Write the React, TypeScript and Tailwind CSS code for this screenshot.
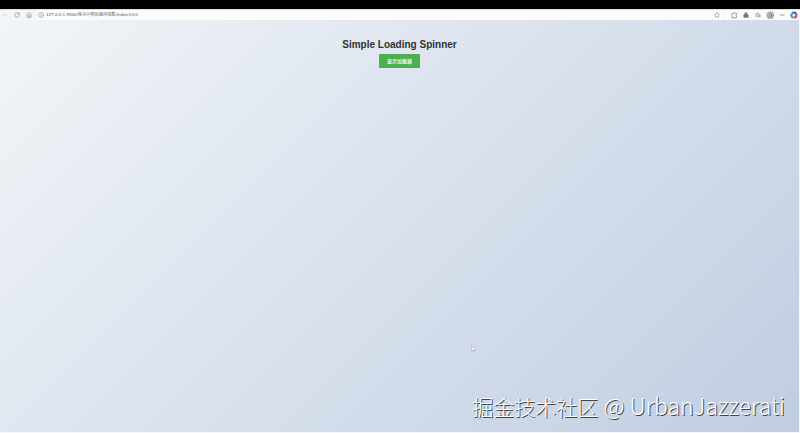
import { useState } from "react";
import { ArrowLeft, CircleUserRound, Ellipsis, House, Info, Lock, RotateCw, Star } from "lucide-react";

const iconButton = "flex size-2 items-center justify-center text-[#777777]";

function CopilotLogo() {
  return (
    <svg viewBox="0 0 16 16" className="size-2">
      <path d="M5 1h5l2 4H7L4 11H1.5Q0 9 1 7z" fill="#2f8fd8" />
      <path d="M10 1q2 0 3 3l1 2H8z" fill="#2b4fb5" />
      <path d="M15 6q1 3-1 7l-2 2H7l3-9z" fill="#d9578f" />
      <path d="M1 9h5l2 6H5q-3 0-4-6z" fill="#4fae6b" />
      <path d="M6 6h4l-1 4H5z" fill="#ffffff" />
    </svg>
  );
}

function FavoritesIcon() {
  return (
    <svg viewBox="0 0 24 24" className="size-[6px]" fill="none" stroke="currentColor" strokeWidth="2.5">
      <path d="M10 3l2.500 5.500 6 .8-4.300 4 1 6L10 16.500 5 19.300l1-6-4.500-4 6-.8z" />
      <path d="M17 14h6M16 19h7" />
    </svg>
  );
}

function ExtensionsIcon() {
  return (
    <svg viewBox="0 0 24 24" className="size-[7px]" fill="none" stroke="currentColor" strokeWidth="2.5">
      <path d="M4 5h5a3 3 0 0 1 6 0h4v5a3 3 0 0 0 0 5v5H4v-5a3 3 0 0 1 0-5z" />
    </svg>
  );
}

function BrowserBar() {
  const [url, setUrl] = useState("127.0.0.1:5500/练习小项目/脉冲加载/index.html");

  return (
    <header className="flex h-[11px] items-center border-t border-[#dddddd] bg-[#f5f5f5]">
      <nav className="flex items-center gap-1 pr-1 pl-[1px]">
        <button aria-label="Back" className="flex size-2 items-center justify-center text-[#cccccc]">
          <ArrowLeft size={6} />
        </button>
        <button aria-label="Reload" className={iconButton}>
          <RotateCw size={6} />
        </button>
        <button aria-label="Home" className={iconButton}>
          <House size={6} />
        </button>
      </nav>
      <div className="flex h-full min-w-0 flex-1 items-center gap-[2px] bg-[#fcfcfc] pl-[1px]">
        <Info size={6} className="text-[#777777]" />
        <input
          aria-label="Address"
          value={url}
          onChange={(e) => setUrl(e.target.value)}
          className="h-2 min-w-0 flex-1 bg-transparent font-['DejaVu_Sans','Noto_Sans_CJK_SC',sans-serif] text-[4px] leading-2 text-[#555555] outline-none"
        />
        <div className="flex items-center gap-[2px] pr-1">
          <button aria-label="Add to favorites" className={iconButton}>
            <Star size={6} />
          </button>
          <span className="h-2 w-px bg-[#eeeeee]" />
        </div>
        <div className="flex items-center gap-1 pr-[2px]">
          <button aria-label="Extensions" className={iconButton}>
            <ExtensionsIcon />
          </button>
          <button aria-label="Password extension" className={iconButton}>
            <Lock size={6} fill="currentColor" />
          </button>
          <button aria-label="Favorites" className={iconButton}>
            <FavoritesIcon />
          </button>
          <button aria-label="Profile" className="flex size-2 items-center justify-center rounded-full bg-[#d5d5d5] text-[#666666]">
            <CircleUserRound size={7} />
          </button>
          <button aria-label="Settings and more" className={iconButton}>
            <Ellipsis size={6} />
          </button>
          <button aria-label="Copilot">
            <CopilotLogo />
          </button>
        </div>
      </div>
    </header>
  );
}

function Pointer() {
  return (
    <svg viewBox="0 0 12 16" className="absolute top-[79%] left-[59%] h-2 w-[5px]">
      <path d="M1 1v12l3-3 2 5 2-1-2-4h5z" fill="#ffffff" stroke="#888888" />
    </svg>
  );
}

export default function App() {
  const [loading, setLoading] = useState(false);

  return (
    <div className="flex min-h-screen flex-col bg-[#f5f7fa] font-['Liberation_Sans','Noto_Sans_CJK_SC',sans-serif]">
      <div className="h-[9px] bg-black" />
      <BrowserBar />
      <main className="relative mr-px mb-px flex flex-1 flex-col items-center gap-px bg-linear-135 from-[#f2f5f8] to-[#c0cde1] pt-[17px]">
        <h1 className="text-[10px] leading-4 font-bold text-[#333333]">Simple Loading Spinner</h1>
        <button
          aria-pressed={loading}
          onClick={() => setLoading(!loading)}
          className="rounded-[1px] bg-[#4caf50] px-2 text-[5px] leading-[14px] font-medium text-white"
        >
          显示加载器
        </button>
        <Pointer />
        <p className="absolute right-[14px] bottom-[10px] font-['Noto_Sans_CJK_SC',sans-serif] text-[23px] leading-8 font-light text-white [text-shadow:1px_1px_0_#444444]">
          <span className="text-[21px]">掘金技术社区</span> @ UrbanJazzerati
        </p>
      </main>
    </div>
  );
}
